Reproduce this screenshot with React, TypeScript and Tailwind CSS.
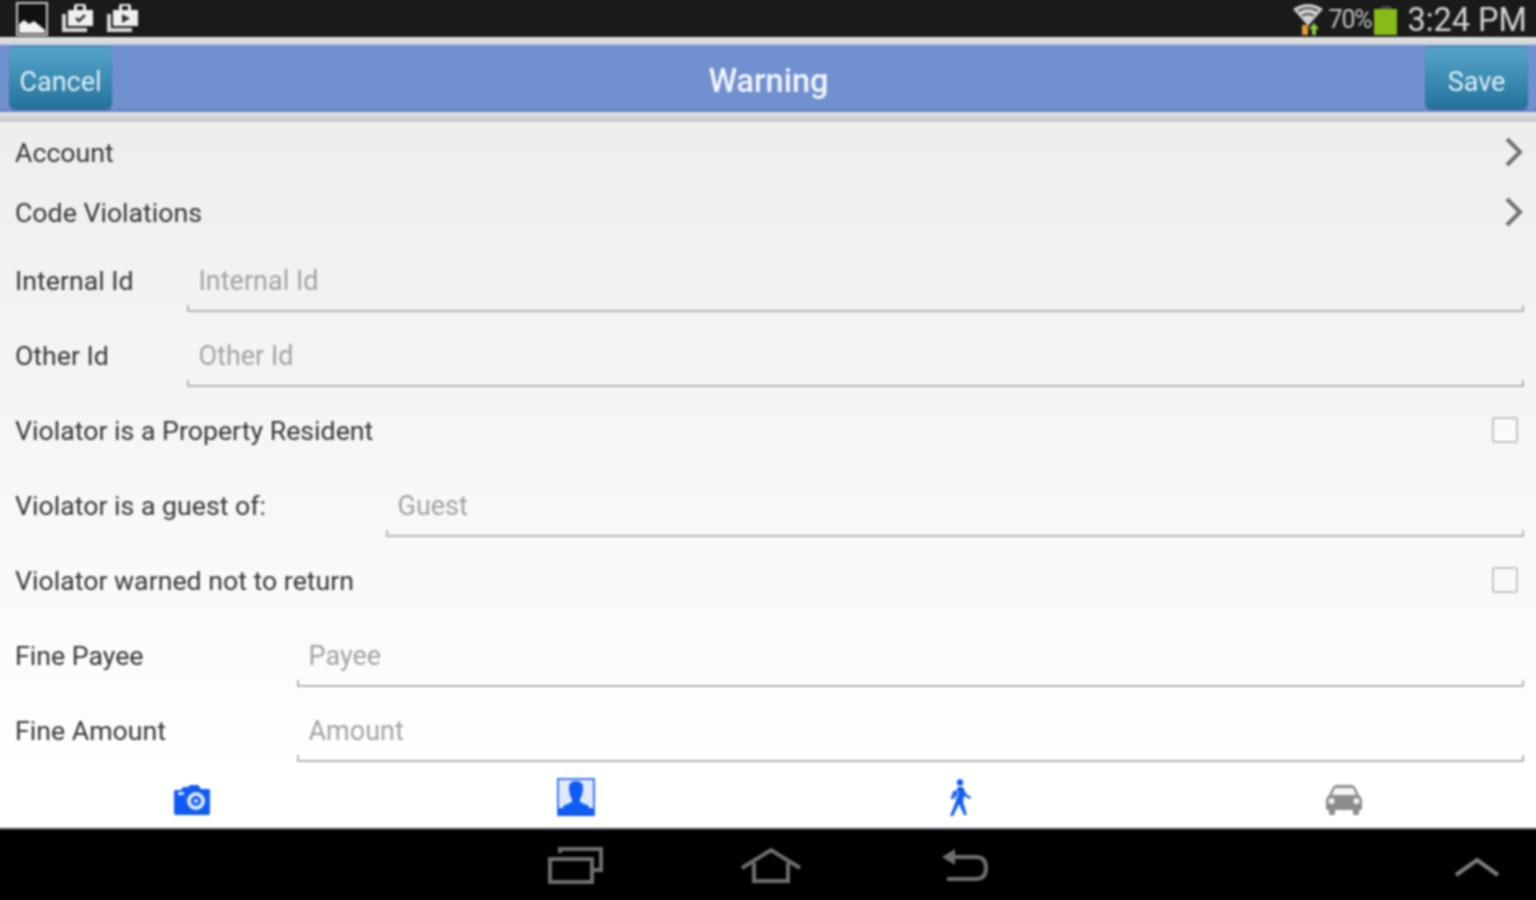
import React from "react";

function Chevron() {
  return (
    <svg width="20" height="32" viewBox="0 0 20 32" fill="none" className="shrink-0">
      <path d="M3 3 L16 16 L3 29" stroke="#707070" strokeWidth="4" />
    </svg>
  );
}

function NavRow({ label }: { label: string }) {
  return (
    <div className="flex h-[60px] items-center justify-between pl-[23px] pr-[20px]">
      <span className="pt-[3px]">{label}</span>
      <Chevron />
    </div>
  );
}

function InputRow({ label, placeholder, left }: { label: string; placeholder: string; left: string }) {
  return (
    <div className="flex h-[75px] pl-[23px] pr-[20px]">
      <span className={`${left} shrink-0 pt-[19px]`}>{label}</span>
      <div className="relative h-[70px] flex-1 border-b-2 border-[#b4b4b4]">
        <input
          placeholder={placeholder}
          readOnly
          className="h-[78px] w-full bg-transparent pl-[11.5px] text-[27px] outline-none placeholder:text-[#a2a2a2]"
        />
        <span className="absolute bottom-0 left-0 h-[5px] w-[2px] bg-[#b4b4b4]" />
        <span className="absolute bottom-0 right-0 h-[5px] w-[2px] bg-[#b4b4b4]" />
      </div>
    </div>
  );
}

function CheckRow({ label }: { label: string }) {
  return (
    <div className="flex h-[75px] items-center justify-between pl-[23px] pr-[26px]">
      <span className="pt-[3px]">{label}</span>
      <span className="h-[26px] w-[26px] rounded-[2px] border-2 border-[#c4c4c4] bg-[#fafafa]" />
    </div>
  );
}

function HeaderButton({ label }: { label: string }) {
  return (
    <button className="flex h-[63px] w-[103px] items-center justify-center rounded-[6px] border-t border-[#2f7ea3] bg-gradient-to-b from-[#55a5cb] to-[#23739b] pt-[10px] text-[27px] text-[#dff0f7] shadow-[0_1px_1px_rgba(30,60,110,0.5)]">
      {label}
    </button>
  );
}

export default function App() {
  return (
    <div className="h-[900px] w-[1536px] overflow-hidden bg-black">
      {/* blurred layer runs 8px past the page so its edges stay solid */}
      <div className="-ml-[8px] -mt-[8px] flex h-[916px] w-[1552px] flex-col bg-black font-['Roboto',sans-serif] text-[26.7px] text-[#363636] blur-[1px]">
        {/* status bar */}
        <div className="flex h-[45px] items-center justify-between bg-[#1a1a1a] pl-[24px] pr-[17px] pt-[8px]">
          <div className="flex items-start gap-[13px]">
            <svg width="32" height="34" viewBox="0 0 32 34" fill="none" className="mt-[1px]">
              <rect x="1" y="1" width="30" height="32" stroke="#c8c8c8" strokeWidth="2" fill="#111" />
              <path d="M3 31 V22 L8 18 L13 22 L18 19 L29 28 V31 Z" fill="#f2f2f2" />
            </svg>
            <svg width="34" height="32" viewBox="0 0 34 32">
              <path d="M1 13 H5 V27 H26 V31 H1 Z" fill="#d8d8d8" />
              <path d="M7 9 H13 V5 Q13 3 15 3 H23 Q25 3 25 5 V9 H32 V25 H7 Z" fill="#f0f0f0" />
              <path d="M16 5 H22 V9 H16 Z" fill="#1a1a1a" />
              <path d="M15 17 L18 20 L24 14" stroke="#333" strokeWidth="2.5" fill="none" />
            </svg>
            <svg width="34" height="32" viewBox="0 0 34 32" className="-ml-[2px]">
              <path d="M1 13 H5 V27 H26 V31 H1 Z" fill="#d8d8d8" />
              <path d="M7 9 H13 V5 Q13 3 15 3 H23 Q25 3 25 5 V9 H32 V25 H7 Z" fill="#f0f0f0" />
              <path d="M16 5 H22 V9 H16 Z" fill="#1a1a1a" />
              <path d="M16 13 L24 17.5 L16 22 Z" fill="#333" />
            </svg>
          </div>
          <div className="flex items-center">
            <svg width="34" height="34" viewBox="0 0 34 34" fill="none" className="mr-[4px]">
              <path d="M2 7 Q17 -3 32 7 L17 24 Z" fill="#cfcfcf" />
              <path d="M7 9 Q17 3 27 9" stroke="#333" strokeWidth="1.5" />
              <path d="M11 14 Q17 10 23 14" stroke="#333" strokeWidth="1.5" />
              <path d="M11 23 H17 V33 H11 Z" fill="#e69a3a" />
              <path d="M21 33 V27 H18 L23 21 L28 27 H25 V33 Z" fill="#8fcf3a" />
            </svg>
            <span className="pt-[2px] text-[25px] tracking-[-1.2px] text-[#c4c4c4]">70%</span>
            <div className="ml-[3px] mt-[4px] flex flex-col items-center">
              <span className="h-[3px] w-[10px] bg-[#444]" />
              <span className="h-[26px] w-[23px] bg-[#86bb1a]" />
            </div>
            <span className="ml-[10px] pt-[3px] text-[32.5px] leading-[37px] text-[#d4d4d4]">3:24 PM</span>
          </div>
        </div>
        <div className="h-[8px] bg-gradient-to-b from-[#e4e4e4] to-[#cfd2d8]" />

        {/* title bar */}
        <div className="grid h-[67px] grid-cols-[1fr_auto_1fr] items-center border-b-[3px] border-[#6584c8] bg-[#7090d0] pl-[17px] pr-[16px]">
          <div className="flex justify-start">
            <HeaderButton label="Cancel" />
          </div>
          <span className="pt-[9px] text-[32.5px] font-medium text-[#f2f5fb]">Warning</span>
          <div className="flex justify-end">
            <HeaderButton label="Save" />
          </div>
        </div>
        <div className="h-[10px] bg-gradient-to-b from-[#e2e2e2] to-[#c8c8c8]" />

        {/* form */}
        <div className="flex h-[646px] flex-col bg-gradient-to-b from-[#eeeeee] to-[#ffffff]">
          <NavRow label="Account" />
          <NavRow label="Code Violations" />
          <InputRow label="Internal Id" placeholder="Internal Id" left="w-[172px]" />
          <InputRow label="Other Id" placeholder="Other Id" left="w-[172px]" />
          <CheckRow label="Violator is a Property Resident" />
          <InputRow label="Violator is a guest of:" placeholder="Guest" left="w-[371px]" />
          <CheckRow label="Violator warned not to return" />
          <InputRow label="Fine Payee" placeholder="Payee" left="w-[282px]" />
          <InputRow label="Fine Amount" placeholder="Amount" left="w-[282px]" />
        </div>

        {/* tabs */}
        <div className="grid h-[60px] grid-cols-4 bg-white px-[8px]">
          <div className="flex items-center justify-center">
            <svg width="38" height="32" viewBox="0 0 38 32" className="mt-[4px]">
              <path d="M2 6 H8 L10 3 H15 L17 1 H25 L28 5 H36 Q37 5 37 7 V29 Q37 31 35 31 H3 Q1 31 1 29 V8 Q1 6 2 6 Z" fill="#0f5cf5" />
              <circle cx="23" cy="17" r="9" fill="#dbe6ff" />
              <circle cx="23" cy="17" r="5" fill="#0f5cf5" />
              <circle cx="23" cy="17" r="2" fill="#dbe6ff" />
              <rect x="5" y="8" width="6" height="3" rx="1" fill="#dbe6ff" />
            </svg>
          </div>
          <div className="flex items-center justify-center">
            <svg width="38" height="38" viewBox="0 0 38 38" className="-mt-[2px]">
              <rect x="1" y="1" width="36" height="36" fill="#dfe9ff" stroke="#3b78f7" strokeWidth="2" />
              <path d="M19 3 Q27 3 26 12 Q25 19 23 21 V24 L32 28 V31 H6 V28 L15 24 V21 Q13 19 12 12 Q11 3 19 3 Z" fill="#0f5cf5" />
              <rect x="1" y="30" width="36" height="8" fill="#0f5cf5" />
            </svg>
          </div>
          <div className="flex items-center justify-center">
            <svg width="26" height="38" viewBox="0 0 26 38" fill="none">
              <circle cx="13" cy="3.5" r="3.2" fill="#0f5cf5" />
              <path d="M11 8 H16 L19 15 L24 18 L23 20 L17 17 L16 23 L20 36 H17 L12 25 L6 37 H3 L9 22 L8 14 Z" fill="#0f5cf5" />
              <path d="M8 12 L5 20" stroke="#0f5cf5" strokeWidth="3" />
              <path d="M11 12 L10 20" stroke="#9dbcff" strokeWidth="1.5" />
            </svg>
          </div>
          <div className="flex items-center justify-center">
            <svg width="38" height="32" viewBox="0 0 38 32" className="mt-[4px]">
              <path d="M8 3 Q9 1 12 1 H26 Q29 1 30 3 L34 11 Q37 13 37 16 V24 Q37 26 34 26 V30 Q34 31 32 31 H29 Q28 31 28 30 V26 H10 V30 Q10 31 9 31 H6 Q4 31 4 30 V26 Q1 26 1 24 V16 Q1 13 4 11 Z" fill="#8c8c8c" />
              <path d="M10 4 H28 L31 11 H7 Z" fill="#f4f4f4" />
              <circle cx="6.5" cy="17" r="3" fill="#f4f4f4" />
              <circle cx="31.5" cy="17" r="3" fill="#f4f4f4" />
            </svg>
          </div>
        </div>
        <div className="h-[2px] bg-[#3f4650]" />

        {/* system nav */}
        <div className="relative flex h-[78px] items-center justify-center gap-[136px] bg-black pb-[8px]">
          <svg width="56" height="38" viewBox="0 0 56 38" fill="none" stroke="#6e6e6e" strokeWidth="4">
            <rect x="2" y="13" width="42" height="23" />
            <path d="M12 7 V3 H53 V24 H44" />
          </svg>
          <svg width="62" height="36" viewBox="0 0 62 36" fill="none" stroke="#6e6e6e" strokeWidth="4">
            <path d="M2 21 L31 3 L60 21" />
            <path d="M14 16 V34 H48 V16" />
          </svg>
          <svg width="48" height="34" viewBox="0 0 48 34" fill="none" className="ml-[2px]">
            <path d="M2 9 L15 1 V17 Z" fill="#6e6e6e" />
            <path d="M12 9 H36 Q46 9 46 20 Q46 31 36 31 H7" stroke="#6e6e6e" strokeWidth="4" />
          </svg>
          <svg width="46" height="20" viewBox="0 0 46 20" fill="none" stroke="#7c7c7c" strokeWidth="4" className="absolute right-[44px] top-[27px]">
            <path d="M2 18 L23 3 L44 18" />
          </svg>
        </div>
      </div>
    </div>
  );
}
